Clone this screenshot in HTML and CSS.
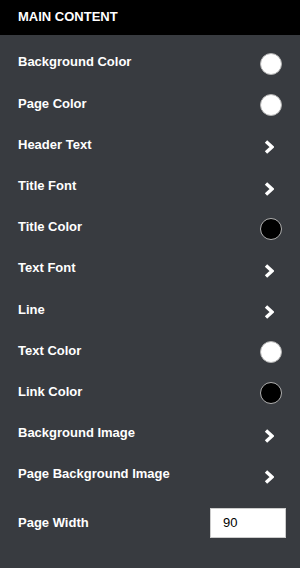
FILE: index.html
```html
<!DOCTYPE html>
<html lang="en">
<head>
    <meta charset="UTF-8" />
    <meta name="viewport" content="width=device-width, initial-scale=1.0" />
    <title>Main Content</title>
    <link rel="stylesheet" href="styles.css">
</head>
<body>
    <!-- Panel header -->
    <div class="panel-head">MAIN CONTENT</div>

    <!-- Settings list -->
    <div class="settings">
        <div class="row">
            <span class="label">Background Color</span>
            <span class="swatch white"></span>
        </div>
        <div class="row">
            <span class="label">Page Color</span>
            <span class="swatch white"></span>
        </div>
        <div class="row">
            <span class="label">Header Text</span>
            <svg class="chev" width="10" height="14" viewBox="0 0 10 14"><path d="M2 1.5 L8 7 L2 12.5" /></svg>
        </div>
        <div class="row">
            <span class="label">Title Font</span>
            <svg class="chev" width="10" height="14" viewBox="0 0 10 14"><path d="M2 1.5 L8 7 L2 12.5" /></svg>
        </div>
        <div class="row">
            <span class="label">Title Color</span>
            <span class="swatch black"></span>
        </div>
        <div class="row">
            <span class="label">Text Font</span>
            <svg class="chev" width="10" height="14" viewBox="0 0 10 14"><path d="M2 1.5 L8 7 L2 12.5" /></svg>
        </div>
        <div class="row">
            <span class="label">Line</span>
            <svg class="chev" width="10" height="14" viewBox="0 0 10 14"><path d="M2 1.5 L8 7 L2 12.5" /></svg>
        </div>
        <div class="row">
            <span class="label">Text Color</span>
            <span class="swatch white"></span>
        </div>
        <div class="row">
            <span class="label">Link Color</span>
            <span class="swatch black"></span>
        </div>
        <div class="row">
            <span class="label">Background Image</span>
            <svg class="chev" width="10" height="14" viewBox="0 0 10 14"><path d="M2 1.5 L8 7 L2 12.5" /></svg>
        </div>
        <div class="row">
            <span class="label">Page Background Image</span>
            <svg class="chev" width="10" height="14" viewBox="0 0 10 14"><path d="M2 1.5 L8 7 L2 12.5" /></svg>
        </div>
        <div class="row row-input">
            <span class="label">Page Width</span>
            <input class="width-input" type="text" value="90">
        </div>
    </div>
</body>
</html>
```

FILE: styles.css
```css
body {
    font-family: Arial, "Liberation Sans", sans-serif;
    background-color: #383b40;
    margin: 0;
    padding: 0;
    color: #fff;
}
.panel-head {
    background-color: #000;
    height: 35px;
    line-height: 33px;
    padding: 0 18px;
    font-size: 13px;
    font-weight: bold;
}
.settings {
    padding: 8.4px 18px 0 18px;
}
.row {
    display: flex;
    justify-content: space-between;
    align-items: center;
    height: 41.2px;
}
.label {
    font-size: 13px;
    font-weight: bold;
    margin-top: -4px;
}
.swatch {
    width: 20px;
    height: 20px;
    border-radius: 50%;
    border: 1px solid #b0b0b0;
}
.swatch.white {
    background-color: #fff;
}
.swatch.black {
    background-color: #000;
}
.chev {
    margin-right: 8px;
    margin-top: 2px;
}
.chev path {
    fill: none;
    stroke: #fff;
    stroke-width: 3.4;
}
.row-input {
    height: 47px;
    margin-top: 3px;
}
.row-input .label {
    margin-top: 0;
}
.width-input {
    width: 76px;
    height: 30px;
    box-sizing: border-box;
    border: 1px solid #ccc;
    padding: 0 12px;
    font-family: Arial, "Liberation Sans", sans-serif;
    font-size: 13px;
    color: #000;
    margin-right: -4px;
}
```
